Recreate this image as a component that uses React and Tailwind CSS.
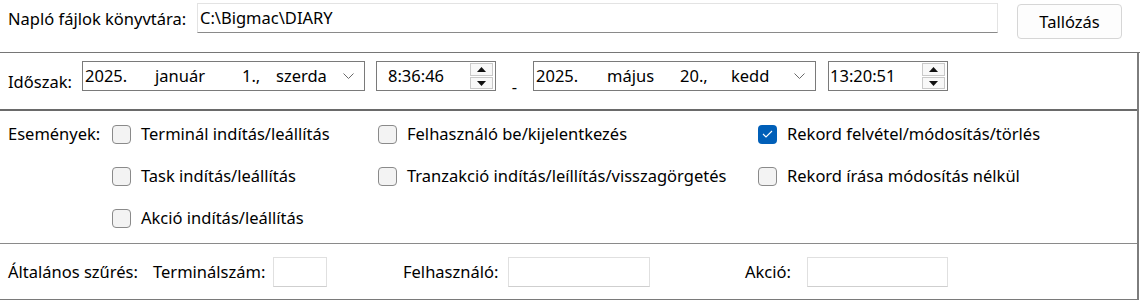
import React from "react";

function Checkbox({ checked }) {
  if (checked) {
    return (
      <div className="w-[19px] h-[19px] rounded-[4px] bg-[#005fb8] flex items-center justify-center shrink-0">
        <svg width="11" height="8" viewBox="0 0 11 8">
          <polyline points="1,4 4,7 10,1" fill="none" stroke="#ffffff" strokeWidth="1.1" />
        </svg>
      </div>
    );
  }
  return <div className="w-[19px] h-[19px] rounded-[4px] border border-[#8a8a8a] bg-[#f3f3f3] shrink-0" />;
}

function CheckItem({ label, checked }) {
  return (
    <div className="flex items-center h-[42px]">
      <Checkbox checked={checked} />
      <span className="ml-[10px] whitespace-nowrap">{label}</span>
    </div>
  );
}

function Spinner() {
  return (
    <div className="flex flex-col gap-[1px] w-[23px] mr-[2px]">
      <div className="h-[13px] border border-[#c9c9c9] bg-[#f8f8f8] flex items-center justify-center">
        <svg width="9" height="5" viewBox="0 0 9 5">
          <polygon points="0,5 4.5,0 9,5" fill="#111" />
        </svg>
      </div>
      <div className="h-[12px] border border-[#c9c9c9] bg-[#f8f8f8] flex items-center justify-center">
        <svg width="9" height="5" viewBox="0 0 9 5">
          <polygon points="0,0 9,0 4.5,5" fill="#111" />
        </svg>
      </div>
    </div>
  );
}

function Chevron() {
  return (
    <svg width="11" height="6" viewBox="0 0 11 6" className="mr-[10px]">
      <polyline points="0.5,0.5 5.5,5.5 10.5,0.5" fill="none" stroke="#6a6a6a" strokeWidth="1" />
    </svg>
  );
}

function DateBox({ parts, widths }) {
  return (
    <div className="w-[283px] h-[30px] border border-[#7a7a7a] flex items-center pl-[2px]">
      <span className="flex-1 flex whitespace-nowrap">
        {parts.map((p, i) => (
          <span key={i} style={i < widths.length ? { width: widths[i] } : undefined} className="shrink-0">
            {p}
          </span>
        ))}
      </span>
      <Chevron />
    </div>
  );
}

function TimeBox({ value, pad }) {
  return (
    <div className="w-[120px] h-[30px] border border-[#7a7a7a] flex items-center">
      <span className={`flex-1 ${pad}`}>{value}</span>
      <Spinner />
    </div>
  );
}

export default function App() {
  return (
    <div className="w-[1140px] h-[301px] bg-white text-black text-[16.5px] leading-[22px] font-['Noto_Sans',sans-serif] overflow-hidden">
      {/* Section 1 */}
      <div className="h-[53px] border-b border-[#767676] flex items-start pl-2">
        <span className="w-[189px] mt-[8px] whitespace-nowrap">Napló fájlok könyvtára:</span>
        <div className="w-[801px] h-[30px] mt-[3px] border border-[#e3e3e3] border-b-[#8a8a8a] flex items-center pl-[2px]">
          C:\Bigmac\DIARY
        </div>
        <button className="ml-[19px] mt-[4px] w-[105px] h-[35px] rounded-[4px] border border-[#d6d6d6] bg-[#fdfdfd] flex items-center justify-center">
          Tallózás
        </button>
      </div>

      <div className="w-[1139px] border-r-2 border-[#7d7d7d]">
        {/* Section 2 */}
        <div className="h-[58px] border-b-2 border-[#6a6a6a] flex items-start pl-2">
          <span className="w-[74px] mt-[18px]">Időszak:</span>
          <div className="mt-[8px]">
            <DateBox parts={["2025.", "január", "1.,", "szerda"]} widths={[70, 87, 34]} />
          </div>
          <div className="ml-[11px] mt-[8px]">
            <TimeBox value="8:36:46" pad="pl-[11px]" />
          </div>
          <span className="w-[37px] mt-[23px] text-center">-</span>
          <div className="mt-[8px]">
            <DateBox parts={["2025.", "május", "20.,", "kedd"]} widths={[71, 73, 51]} />
          </div>
          <div className="ml-[12px] mt-[8px]">
            <TimeBox value="13:20:51" pad="pl-[1px]" />
          </div>
        </div>

        {/* Section 3 */}
        <div className="h-[133px] border-b border-[#8a8a8a] pl-2 pt-[2px] grid grid-cols-[104px_266px_380px_1fr] content-start">
          <div className="h-[42px] flex items-center">Események:</div>
          <CheckItem label="Terminál indítás/leállítás" />
          <CheckItem label="Felhasználó be/kijelentkezés" />
          <CheckItem label="Rekord felvétel/módosítás/törlés" checked />
          <div />
          <CheckItem label="Task indítás/leállítás" />
          <CheckItem label="Tranzakció indítás/leíllítás/visszagörgetés" />
          <CheckItem label="Rekord írása módosítás nélkül" />
          <div />
          <CheckItem label="Akció indítás/leállítás" />
          <div />
          <div />
        </div>

        {/* Section 4 */}
        <div className="h-[56px] border-b border-[#7a7a7a] flex items-center pl-2">
          <span className="w-[145px] whitespace-nowrap">Általános szűrés:</span>
          <span className="w-[120px] whitespace-nowrap">Terminálszám:</span>
          <div className="w-[54px] h-[30px] border border-[#e0e0e0] border-b-[#cfcfcf]" />
          <span className="ml-[76px] w-[105px] whitespace-nowrap">Felhasználó:</span>
          <div className="w-[142px] h-[30px] border border-[#e0e0e0] border-b-[#cfcfcf]" />
          <span className="ml-[95px] w-[62px] whitespace-nowrap">Akció:</span>
          <div className="w-[141px] h-[30px] border border-[#e0e0e0] border-b-[#cfcfcf]" />
        </div>
      </div>
    </div>
  );
}
